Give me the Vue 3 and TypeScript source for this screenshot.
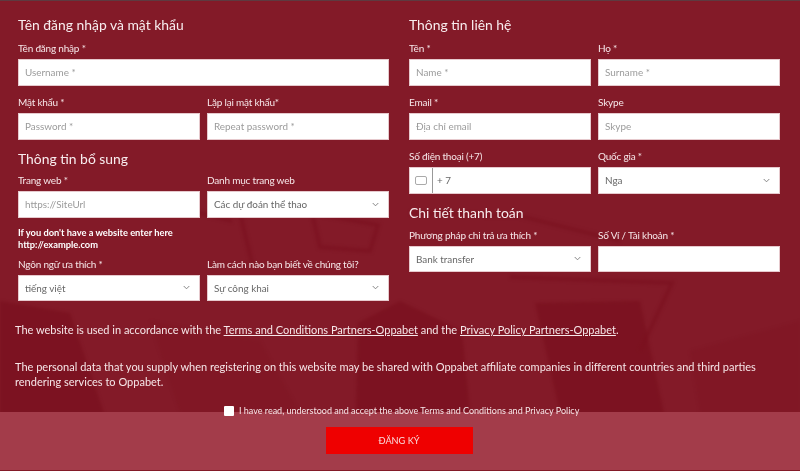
<script setup lang="ts">
interface Field {
  label: string
  value?: string
  placeholder?: string
  select?: boolean
  wide?: boolean
  phone?: boolean
}
const login: Field[] = [
  { label: 'Tên đăng nhập *', placeholder: 'Username *', wide: true },
  { label: 'Mật khẩu *', placeholder: 'Password *' },
  { label: 'Lặp lại mật khẩu*', placeholder: 'Repeat password *' },
]
const extra: Field[] = [
  { label: 'Trang web *', placeholder: 'https://SiteUrl' },
  { label: 'Danh mục trang web', value: 'Các dự đoán thể thao', select: true },
]
const extra2: Field[] = [
  { label: 'Ngôn ngữ ưa thích *', value: 'tiếng việt', select: true },
  { label: 'Làm cách nào bạn biết về chúng tôi?', value: 'Sự công khai', select: true },
]
const contact: Field[] = [
  { label: 'Tên *', placeholder: 'Name *' },
  { label: 'Họ *', placeholder: 'Surname *' },
  { label: 'Email *', placeholder: 'Địa chỉ email' },
  { label: 'Skype', placeholder: 'Skype' },
  { label: 'Số điện thoại (+7)', value: '+ 7', phone: true },
  { label: 'Quốc gia *', value: 'Nga', select: true },
]
const payment: Field[] = [
  { label: 'Phương pháp chi trả ưa thích *', value: 'Bank transfer', select: true },
  { label: 'Số Ví / Tài khoản *', value: '' },
]
const groups = { login, extra, extra2, contact, payment }
</script>

<template>
  <div class="page">
    <svg class="backdrop" viewBox="0 0 800 471" aria-hidden="true">
      <g fill="none" stroke="#7a101e" stroke-width="4" opacity="0.6">
        <path d="M120 205 L200 212 L232 220" />
        <path d="M240 212 L252 262" />
        <path d="M312 212 L378 224 L370 250 L320 246 Z" />
        <path d="M410 212 L520 215 L620 240" />
        <path d="M510 276 L672 282 L640 350" />
      </g>
      <g fill="#7a101e" opacity="0.7">
        <path d="M0 300 L70 312 L104 412 L0 412 Z" />
        <path d="M358 322 L400 300 L462 330 L470 412 L356 412 Z" />
        <path d="M535 302 L640 300 L664 412 L560 412 Z" />
        <path d="M150 320 L260 340 L300 412 L180 412 Z" opacity="0.35" />
        <path d="M690 350 L800 320 L800 412 L700 412 Z" opacity="0.3" />
      </g>
    </svg>

    <main class="columns">
      <section class="column">
        <h2>Tên đăng nhập và mật khẩu</h2>
        <div class="grid first">
          <label v-for="f in groups.login" :key="f.label" class="field" :class="{ wide: f.wide }">
            <span class="label">{{ f.label }}</span>
            <span class="box"><span class="ph">{{ f.placeholder }}</span></span>
          </label>
        </div>
        <h2 class="second">Thông tin bổ sung</h2>
        <div class="grid">
          <label v-for="f in groups.extra" :key="f.label" class="field">
            <span class="label">{{ f.label }}</span>
            <span class="box" :class="{ select: f.select }">
              <span :class="f.select ? 'val' : 'ph'">{{ f.value ?? f.placeholder }}</span>
              <svg v-if="f.select" class="chev" viewBox="0 0 8 5"><path d="M.8.8 4 4l3.2-3.2" /></svg>
            </span>
          </label>
        </div>
        <p class="hint">If you don't have a website enter here<br />http://example.com</p>
        <div class="grid tight">
          <label v-for="f in groups.extra2" :key="f.label" class="field">
            <span class="label">{{ f.label }}</span>
            <span class="box select">
              <span class="val">{{ f.value }}</span>
              <svg class="chev" viewBox="0 0 8 5"><path d="M.8.8 4 4l3.2-3.2" /></svg>
            </span>
          </label>
        </div>
      </section>

      <section class="column">
        <h2>Thông tin liên hệ</h2>
        <div class="grid first">
          <label v-for="f in groups.contact" :key="f.label" class="field">
            <span class="label">{{ f.label }}</span>
            <span class="box" :class="{ select: f.select, phone: f.phone }">
              <span v-if="f.phone" class="flag"><i /></span>
              <span :class="f.placeholder ? 'ph' : 'val'">{{ f.value ?? f.placeholder }}</span>
              <svg v-if="f.select" class="chev" viewBox="0 0 8 5"><path d="M.8.8 4 4l3.2-3.2" /></svg>
            </span>
          </label>
        </div>
        <h2 class="third">Chi tiết thanh toán</h2>
        <div class="grid pay">
          <label v-for="f in groups.payment" :key="f.label" class="field">
            <span class="label">{{ f.label }}</span>
            <span class="box" :class="{ select: f.select }">
              <span class="val">{{ f.value }}</span>
              <svg v-if="f.select" class="chev" viewBox="0 0 8 5"><path d="M.8.8 4 4l3.2-3.2" /></svg>
            </span>
          </label>
        </div>
      </section>
    </main>

    <div class="legal">
      <p>The website is used in accordance with the <a>Terms and Conditions Partners-Oppabet</a> and the <a>Privacy Policy Partners-Oppabet</a>.</p>
      <p class="data">The personal data that you supply when registering on this website may be shared with Oppabet affiliate companies in different countries and third parties rendering services to Oppabet.</p>
    </div>

    <footer class="footer">
      <div class="accept">
        <span class="check"></span>
        <span>I have read, understood and accept the above Terms and Conditions and Privacy Policy</span>
      </div>
      <button class="submit" type="button">ĐĂNG KÝ</button>
    </footer>
  </div>
</template>

<style>
html, body { margin: 0; background: #fff; }
</style>

<style scoped>
.page {
  position: relative;
  width: 800px;
  height: 471px;
  overflow: hidden;
  background: #831a28;
  border-top: 1px solid #5d3a40;
  box-sizing: border-box;
  color: #f6e6e8;
  font-family: Lato, "Noto Sans", sans-serif;
  filter: blur(0.3px);
}
.backdrop { position: absolute; inset: 0; width: 800px; height: 471px; filter: blur(1.5px); }
.columns {
  position: relative;
  display: grid;
  grid-template-columns: 371px 371px;
  column-gap: 20px;
  padding: 16px 0 0 18px;
}
h2 { margin: 0; font-size: 13.9px; line-height: 16px; font-weight: 400; color: #f8ecee; }
.second { margin-top: 11.5px; }
.third { margin-top: 11px; }
.grid { display: grid; grid-template-columns: 182px 182px; gap: 10.5px 7px; margin-top: 7px; }
.grid.first { margin-top: 9px; }
.grid.pay { margin-top: 8px; }
.grid.tight { margin-top: 0; }
.field { display: flex; flex-direction: column; gap: 4px; }
.field.wide { grid-column: 1 / 3; }
.label { font-size: 10px; line-height: 13px; letter-spacing: -0.2px; white-space: nowrap; }
.box {
  display: flex;
  align-items: center;
  height: 26.5px;
  box-sizing: border-box;
  padding: 0 6px;
  background: #fff;
  border: 1px solid #e6c9cd;
  font-size: 9.9px;
}
.ph { color: #9b9b9b; }
.val { color: #666; }
.select { justify-content: space-between; }
.chev { width: 7px; height: 5px; margin-right: 3px; fill: none; stroke: #777; stroke-width: 1; }
.phone { padding-left: 0; }
.flag {
  display: flex;
  align-items: center;
  justify-content: center;
  box-sizing: border-box;
  width: 23px;
  height: 100%;
  margin-right: 4px;
  border-right: 1px solid #999;
}
.flag i { box-sizing: border-box; width: 12px; height: 9px; border: 1px solid #aaa; border-radius: 2px; background: #fff; }
.hint { margin: 9px 0 7px; font-size: 9.3px; line-height: 12px; font-weight: 700; color: #fff; }
.legal { position: relative; padding: 21px 15px 0; font-size: 11px; line-height: 15px; }
.legal p { margin: 0; }
.legal .data { margin-top: 21.5px; }
.legal a { color: #f6e6e8; text-decoration: underline; }
.footer {
  position: absolute;
  left: 0;
  right: 0;
  top: 411px;
  bottom: 1px;
  background: #a33c4a;
  display: flex;
  flex-direction: column;
  align-items: center;
}
.accept {
  position: absolute;
  top: -7px;
  left: 224px;
  display: flex;
  align-items: center;
  gap: 5px;
  font-size: 9px;
  line-height: 11px;
  white-space: nowrap;
}
.check { width: 10px; height: 10px; background: #fff; border-radius: 1px; }
.submit {
  margin: 15px 2px 0 0;
  width: 147px;
  height: 27px;
  border: 0;
  background: #ef0000;
  color: #f9dcdc;
  font: 9.2px Lato, "Noto Sans", sans-serif;
}
</style>
